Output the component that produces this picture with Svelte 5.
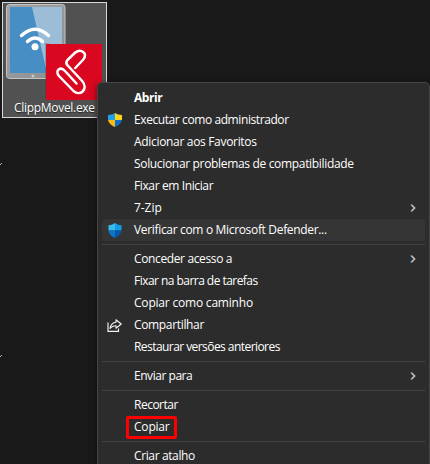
<script>
  const groups = [
    [
      { label: 'Abrir', bold: true, tracking: -0.45 },
      { label: 'Executar como administrador', icon: 'uac', tracking: -0.41 },
      { label: 'Adicionar aos Favoritos', tracking: -0.32 },
      { label: 'Solucionar problemas de compatibilidade', tracking: -0.33 },
      { label: 'Fixar em Iniciar', tracking: -0.38 },
      { label: '7-Zip', submenu: true, tracking: -0.05 },
      { label: 'Verificar com o Microsoft Defender...', icon: 'defender', active: true, tracking: -0.33 }
    ],
    [
      { label: 'Conceder acesso a', submenu: true, tracking: -0.37 },
      { label: 'Fixar na barra de tarefas', tracking: -0.54 },
      { label: 'Copiar como caminho', tracking: -0.2 },
      { label: 'Compartilhar', icon: 'share', tracking: -0.34 },
      { label: 'Restaurar versões anteriores', tracking: -0.56 }
    ],
    [{ label: 'Enviar para', submenu: true, tracking: -0.46 }],
    [
      { label: 'Recortar', tracking: -0.5 },
      { label: 'Copiar', marked: true, tracking: -0.2 }
    ],
    [{ label: 'Criar atalho', tracking: -0.38 }]
  ];
</script>

<main class="desktop">
  <div class="file">
    <svg class="art" width="100" height="98" viewBox="0 0 100 98">
      <defs>
        <linearGradient id="bezel" x1="0" y1="0" x2="1" y2="1">
          <stop offset="0" stop-color="#a3a4a5" />
          <stop offset="1" stop-color="#8c8d8e" />
        </linearGradient>
      </defs>
      <rect x="3.5" y="1.5" width="58.500" height="74" rx="3" fill="url(#bezel)" stroke="#c3c4c5" />
      <rect x="7" y="4" width="52" height="66" fill="#478ec4" />
      <path d="M29 4H59V70H44Z" fill="#9bbdd8" />
      <circle cx="30" cy="73" r="1.5" fill="#c8c8c8" />
      <g fill="none" stroke="#fff" stroke-width="3.4" stroke-linecap="round">
        <path d="M18.500 32.500Q32 20 45.500 32.500" />
        <path d="M24.5 38.500Q32 31.500 39.500 38.500" />
      </g>
      <circle cx="32" cy="43.800" r="3.500" fill="#fff" />
      <rect x="42" y="40" width="4" height="56" fill="#222" opacity=".2" />
      <rect x="43" y="41" width="56" height="56" fill="#d9071f" />
      <path
        d="M72.300 65L80.300 56.500C85 50.500 78 45 72.300 49.500L64.500 57Q62 59.800 64.700 62.500L79.200 78C86 86 77 94 70.500 88L56 73C51.500 67.500 57.500 63 62 68L73.500 80.500"
        fill="none" stroke="#fff" stroke-width="2.500" stroke-linecap="round" stroke-linejoin="round"
      />
    </svg>
    <span class="name">ClippMovel.exe</span>
  </div>
  <svg class="tick first" width="2" height="3"><path d="M0 2h1V1h1V0H1v1H0z" fill="#aaa" /></svg>
  <svg class="tick second" width="2" height="3"><path d="M0 2h1V1h1V0H1v1H0z" fill="#aaa" /></svg>

  <div class="menu" role="menu">
    {#each groups as items}
      <div class="group">
        {#each items as item}
          <div class="item" class:active={item.active} class:bold={item.bold} role="menuitem" tabindex="-1">
            <span class="icon">
              {#if item.icon === 'uac'}
                <svg width="14" height="14" viewBox="0 0 14 14">
                  <path d="M7 0Q4.500 2 0 2V7H7Z" fill="#1fa0e8" />
                  <path d="M7 0Q9.500 2 14 2V7H7Z" fill="#ffd21c" />
                  <path d="M0 7H7V14Q1 11.500 0 7Z" fill="#fcb913" />
                  <path d="M14 7H7V14Q13 11.500 14 7Z" fill="#0b70c4" />
                </svg>
              {:else if item.icon === 'defender'}
                <svg width="14" height="15" viewBox="0 0 14 15">
                  <path d="M7 0Q4 2.300 .5 2.300V7.500H7Z" fill="#35bdf0" />
                  <path d="M7 0Q10 2.300 13.500 2.300V7.500H7Z" fill="#159be4" />
                  <path d="M.5 7.500H7V15Q1 12 .5 7.500Z" fill="#0c75cc" />
                  <path d="M13.500 7.500H7V15Q13 12 13.500 7.500Z" fill="#0657a9" />
                </svg>
              {:else if item.icon === 'share'}
                <svg class="share" width="15" height="13" viewBox="0 0 15 13">
                  <g fill="none" stroke="#f2f2f2" stroke-width="1.150" stroke-linejoin="round">
                    <path d="M1 3.500V12.400H11.500V9.500" />
                    <path d="M9 .8L14.200 5L9 9.200V6.800Q5.500 6.500 3 9.500Q4 3.800 9 3.300Z" />
                  </g>
                </svg>
              {/if}
            </span>
            <span class="label" class:marked={item.marked} style:letter-spacing="{item.tracking}px">{item.label}</span>
            {#if item.submenu}
              <svg class="chevron" width="6" height="8" viewBox="0 0 6 8" fill="none" stroke-width="1">
                <path d="M.4 .7L3.800 4L.4 7.300" stroke="#249bd5" />
                <path d="M2 .7L5.400 4L2 7.300" stroke="#d08060" />
                <path d="M1.200 .7L4.600 4L1.200 7.300" stroke="#fff" />
              </svg>
            {/if}
          </div>
        {/each}
      </div>
    {/each}
  </div>
</main>

<style>
  :global(body) { margin: 0; background: #191919; }
  .desktop {
    position: relative;
    width: 430px;
    height: 464px;
    overflow: hidden;
    background: #191919;
    font-family: "Open Sans", "Noto Sans", sans-serif;
    font-size: 12px;
    color: #fff;
  }
  .file {
    position: absolute;
    left: 2px;
    top: 2px;
    box-sizing: border-box;
    width: 105px;
    height: 116px;
    border: 1px solid #d8d8d8;
    background: #515151;
  }
  .art { display: block; }
  .name {
    display: block;
    margin-top: -2px;
    line-height: 17px;
    padding-left: 11px;
    white-space: nowrap;
    letter-spacing: -0.3px;
    text-shadow: 0 1px 1px #222;
  }
  .tick { position: absolute; left: 0; }
  .first { top: 163px; }
  .second { top: 355px; }
  .menu {
    position: absolute;
    left: 97px;
    top: 82px;
    box-sizing: border-box;
    width: 333px;
    height: 400px;
    padding: 4px;
    border: 1px solid #454545;
    border-radius: 5px 5px 0 0;
    background: #2c2c2c;
    box-shadow: 0 2px 6px #0008;
  }
  .group + .group { border-top: 1px solid #424242; margin-top: 3px; padding-top: 3px; }
  .item {
    display: flex;
    align-items: center;
    height: 22px;
    padding-right: 9px;
    border-radius: 4px;
    white-space: nowrap;
  }
  .active { background: #353535; }
  .bold { font-weight: 700; }
  .icon { display: flex; width: 14px; margin: 0 12px 0 6px; flex: none; justify-content: center; }
  .icon svg { flex: none; }
  .icon .share { margin-left: -2px; }
  .label { position: relative; line-height: 22px; }
  .marked::after {
    content: "";
    position: absolute;
    left: -8px;
    top: 0;
    box-sizing: border-box;
    width: 51px;
    height: 23px;
    border: 3px solid #f00;
    border-radius: 2px;
  }
  .chevron { margin-left: auto; }
</style>
